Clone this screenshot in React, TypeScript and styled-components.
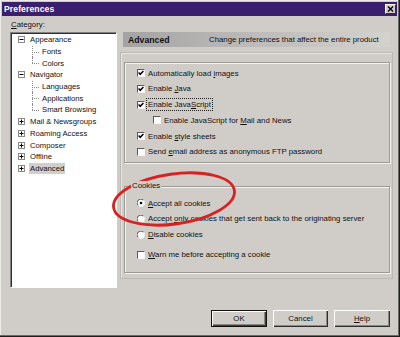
import React from "react";
import styled, { createGlobalStyle } from "styled-components";

const GlobalStyle = createGlobalStyle`
  html, body {
    margin: 0;
    padding: 0;
    background: #d0cdc8;
  }
  body {
    font-family: "Liberation Sans", Arial, sans-serif;
    font-size: 7.8px;
    color: #111;
  }
`;

const Window = styled.div`
  position: relative;
  width: 400px;
  height: 337px;
  box-sizing: border-box;
  padding: 2px 3px 2px 2px;
  background: #d0cdc8;
  box-shadow: inset -1px -1px 0 #1e1e1e, inset -2px -2px 0 #6a6a6a,
    inset 1px 1px 0 #eeece8;
  overflow: hidden;
`;

const TitleBar = styled.div`
  height: 14px;
  display: flex;
  align-items: center;
  justify-content: space-between;
  padding-left: 2px;
  background: #3b1f6e;
  color: #fff;
  font-weight: bold;
  font-size: 8.6px;
  letter-spacing: 0.1px;
`;

const CloseButton = styled.div`
  width: 11px;
  height: 10px;
  margin-right: 1px;
  box-sizing: border-box;
  display: flex;
  align-items: center;
  justify-content: center;
  background: #d0cdc8;
  border-top: 1px solid #fff;
  border-left: 1px solid #fff;
  border-right: 1px solid #303030;
  border-bottom: 1px solid #303030;
`;

const Main = styled.div`
  display: grid;
  grid-template-columns: 107px 273px;
  grid-template-rows: 16px 256px;
  column-gap: 3px;
  padding-left: 8px;
`;

const CategoryLabel = styled.div`
  align-self: center;
  padding-left: 1px;
  padding-top: 1px;
`;

const Tree = styled.div`
  grid-row: 2;
  grid-column: 1;
  box-sizing: border-box;
  background: #fff;
  border-top: 1px solid #808080;
  border-left: 1px solid #808080;
  border-right: 1px solid #fff;
  border-bottom: 1px solid #fff;
  box-shadow: inset 1px 1px 0 #303030;
  padding: 1px 0 0 2px;
`;

const TreeRow = styled.div<{ $child?: boolean }>`
  height: 11.7px;
  display: flex;
  align-items: center;
  padding-left: ${(p) => (p.$child ? "19px" : "5px")};
  font-size: 7.7px;
  white-space: nowrap;
`;

const ExpandBox = styled.span`
  width: 7px;
  height: 7px;
  box-sizing: border-box;
  border: 1px solid #8a8a8a;
  background: #fff;
  display: flex;
  align-items: center;
  justify-content: center;
  margin-right: 4px;
  flex-shrink: 0;
`;

const Connector = styled.span<{ $last?: boolean }>`
  position: relative;
  align-self: stretch;
  width: 7px;
  margin-right: 2px;
  flex-shrink: 0;

  &::before {
    content: "";
    position: absolute;
    left: 0;
    top: 0;
    height: ${(p) => (p.$last ? "50%" : "100%")};
    border-left: 1px dotted #8a8a8a;
  }
  &::after {
    content: "";
    position: absolute;
    left: 0;
    top: 50%;
    width: 7px;
    border-top: 1px dotted #8a8a8a;
  }
`;

const TreeText = styled.span<{ $selected?: boolean }>`
  padding: 0 1px;
  line-height: 11px;
  background: ${(p) => (p.$selected ? "#cfcfcf" : "transparent")};
`;

const RightColumn = styled.div`
  grid-row: 2;
  grid-column: 2;
  display: flex;
  flex-direction: column;
`;

const Header = styled.div`
  height: 15px;
  margin: 0 3px;
  display: flex;
  align-items: center;
  background: linear-gradient(to right, #a3a3a3 0%, #b6b5b3 35%, #d4d2ce 100%);
`;

const HeaderTitle = styled.span`
  width: 86px;
  padding-left: 5px;
  box-sizing: border-box;
  font-weight: bold;
  font-size: 8.7px;
`;

const HeaderText = styled.span`
  white-space: nowrap;
`;

const OuterPanel = styled.div`
  margin-top: 5px;
  height: 227px;
  box-sizing: border-box;
  border: 1px solid #bdbab5;
  box-shadow: inset 1px 1px 0 #e6e4e0;
  padding: 0 2px 0 3px;
`;

const GroupBox = styled.fieldset<{ $height: number; $top: number }>`
  margin: ${(p) => p.$top}px 0 0 0;
  min-width: 0;
  height: ${(p) => p.$height}px;
  box-sizing: border-box;
  border: 1px solid #9c9a96;
  box-shadow: inset 1px 1px 0 #f4f3f0, 1px 1px 0 #f4f3f0;
  padding: 0;
  display: flex;
  flex-direction: column;
`;

const Legend = styled.legend`
  margin-left: 6px;
  padding: 0 1px;
  background: #d0cdc8;
  line-height: 10px;
  position: relative;
  z-index: 1;
`;

const OptionList = styled.div<{ $padTop: number }>`
  display: flex;
  flex-direction: column;
  gap: 3.8px;
  padding: ${(p) => p.$padTop}px 0 0 12px;
`;

const Option = styled.label<{ $indent?: number; $extra?: number }>`
  height: 12px;
  display: flex;
  align-items: center;
  gap: 3px;
  padding-left: ${(p) => p.$indent ?? 0}px;
  margin-top: ${(p) => p.$extra ?? 0}px;
  white-space: nowrap;
`;

const OptionText = styled.span<{ $focused?: boolean }>`
  line-height: 11px;
  padding: 0 1px;
  margin-left: -1px;
  outline: ${(p) => (p.$focused ? "1px dotted #222" : "none")};
`;

const CheckSquare = styled.span`
  width: 8px;
  height: 8px;
  box-sizing: border-box;
  background: #fff;
  border-top: 1px solid #5a5a5a;
  border-left: 1px solid #5a5a5a;
  border-right: 1px solid #f4f4f4;
  border-bottom: 1px solid #f4f4f4;
  display: flex;
  align-items: center;
  justify-content: center;
  flex-shrink: 0;
`;

const RadioMark = styled.svg`
  width: 8px;
  height: 8px;
  flex-shrink: 0;
`;

const ButtonRow = styled.div`
  display: flex;
  justify-content: flex-end;
  gap: 6px;
  margin-top: 22px;
  padding-right: 7px;
`;

const Button = styled.div<{ $default?: boolean; $width: number }>`
  width: ${(p) => p.$width}px;
  height: 17px;
  box-sizing: border-box;
  display: flex;
  align-items: center;
  justify-content: center;
  background: #d0cdc8;
  border: ${(p) => (p.$default ? "1px solid #111" : "none")};
  box-shadow: ${(p) =>
    p.$default
      ? "inset 1px 1px 0 #fff, inset -1px -1px 0 #404040, inset -2px -2px 0 #8a8884"
      : "inset 1px 1px 0 #fff, inset -1px -1px 0 #303030, inset -2px -2px 0 #8a8884"};
`;

const Overlay = styled.svg`
  position: absolute;
  left: 0;
  top: 0;
  width: 400px;
  height: 337px;
  pointer-events: none;
`;

const Checkbox = ({ checked }: { checked?: boolean }) => (
  <CheckSquare>
    {checked && (
      <svg width="6" height="6" viewBox="0 0 6 6">
        <polyline
          points="0.6,2.6 2.2,4.3 5.4,0.9"
          fill="none"
          stroke="#000"
          strokeWidth="1.5"
        />
      </svg>
    )}
  </CheckSquare>
);

const Radio = ({ checked }: { checked?: boolean }) => (
  <RadioMark viewBox="0 0 8 8">
    <circle cx="4" cy="4" r="3.5" fill="#fff" />
    <path d="M1.2 6.5 A3.5 3.5 0 0 1 6.5 1.2" fill="none" stroke="#5a5a5a" strokeWidth="1" />
    <path d="M6.5 1.2 A3.5 3.5 0 0 1 1.2 6.5" fill="none" stroke="#f0f0f0" strokeWidth="1" />
    {checked && <circle cx="4" cy="4" r="1.3" fill="#000" />}
  </RadioMark>
);

const Expander = ({ open }: { open?: boolean }) => (
  <ExpandBox>
    <svg width="5" height="5" viewBox="0 0 5 5">
      <line x1="0.5" y1="2.5" x2="4.5" y2="2.5" stroke="#000" strokeWidth="1" />
      {!open && <line x1="2.5" y1="0.5" x2="2.5" y2="4.5" stroke="#000" strokeWidth="1" />}
    </svg>
  </ExpandBox>
);

type TreeItem = { label: string; child?: boolean; last?: boolean; open?: boolean; selected?: boolean };

const treeItems: TreeItem[] = [
  { label: "Appearance", open: true },
  { label: "Fonts", child: true },
  { label: "Colors", child: true, last: true },
  { label: "Navigator", open: true },
  { label: "Languages", child: true },
  { label: "Applications", child: true },
  { label: "Smart Browsing", child: true, last: true },
  { label: "Mail & Newsgroups" },
  { label: "Roaming Access" },
  { label: "Composer" },
  { label: "Offline" },
  { label: "Advanced", selected: true },
];

export default function App() {
  return (
    <>
      <GlobalStyle />
      <Window>
        <TitleBar>
          <span>Preferences</span>
          <CloseButton>
            <svg width="7" height="6" viewBox="0 0 7 6">
              <path d="M1 0.5 L6 5.5 M6 0.5 L1 5.5" stroke="#000" strokeWidth="1.4" />
            </svg>
          </CloseButton>
        </TitleBar>

        <Main>
          <CategoryLabel>
            <u>C</u>ategory:
          </CategoryLabel>
          <Tree>
            {treeItems.map((item) => (
              <TreeRow key={item.label} $child={item.child}>
                {item.child ? <Connector $last={item.last} /> : <Expander open={item.open} />}
                <TreeText $selected={item.selected}>{item.label}</TreeText>
              </TreeRow>
            ))}
          </Tree>

          <RightColumn>
            <Header>
              <HeaderTitle>Advanced</HeaderTitle>
              <HeaderText>Change preferences that affect the entire product</HeaderText>
            </Header>
            <OuterPanel>
              <GroupBox $height={101} $top={9}>
                <OptionList $padTop={4}>
                  <Option>
                    <Checkbox checked />
                    <OptionText>
                      Automatically load <u>i</u>mages
                    </OptionText>
                  </Option>
                  <Option>
                    <Checkbox checked />
                    <OptionText>
                      Enable <u>J</u>ava
                    </OptionText>
                  </Option>
                  <Option>
                    <Checkbox checked />
                    <OptionText $focused>
                      Enable Java<u>S</u>cript
                    </OptionText>
                  </Option>
                  <Option $indent={16}>
                    <Checkbox />
                    <OptionText>
                      Enable JavaScript for <u>M</u>ail and News
                    </OptionText>
                  </Option>
                  <Option>
                    <Checkbox checked />
                    <OptionText>
                      Enable <u>s</u>tyle sheets
                    </OptionText>
                  </Option>
                  <Option>
                    <Checkbox />
                    <OptionText>
                      Send <u>e</u>mail address as anonymous FTP password
                    </OptionText>
                  </Option>
                </OptionList>
              </GroupBox>

              <GroupBox $height={92} $top={18}>
                <Legend>Cookies</Legend>
                <OptionList $padTop={6}>
                  <Option>
                    <Radio checked />
                    <OptionText>
                      <u>A</u>ccept all cookies
                    </OptionText>
                  </Option>
                  <Option>
                    <Radio />
                    <OptionText>
                      Accept <u>o</u>nly cookies that get sent back to the originating server
                    </OptionText>
                  </Option>
                  <Option>
                    <Radio />
                    <OptionText>
                      <u>D</u>isable cookies
                    </OptionText>
                  </Option>
                  <Option $extra={4.5}>
                    <Checkbox />
                    <OptionText>
                      <u>W</u>arn me before accepting a cookie
                    </OptionText>
                  </Option>
                </OptionList>
              </GroupBox>
            </OuterPanel>
          </RightColumn>
        </Main>

        <ButtonRow>
          <Button $default $width={56}>OK</Button>
          <Button $width={55}>Cancel</Button>
          <Button $width={56}>
            <u>H</u>elp
          </Button>
        </ButtonRow>

        <Overlay viewBox="0 0 400 337">
          <ellipse
            cx="174"
            cy="199"
            rx="61"
            ry="25"
            transform="rotate(-8 174 199)"
            fill="none"
            stroke="#d62222"
            strokeWidth="2.8"
          />
        </Overlay>
      </Window>
    </>
  );
}
